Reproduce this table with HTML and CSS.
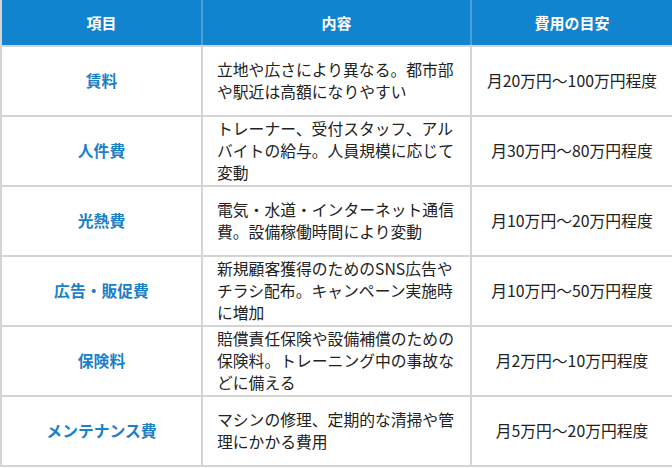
FILE: index.html
```html
<!DOCTYPE html>
<html lang="ja">
<head>
<meta charset="utf-8">
<link rel="stylesheet" href="styles.css">
</head>
<body>
<table class="cost-table">
  <colgroup>
    <col class="c1"><col class="c2"><col class="c3">
  </colgroup>
  <thead>
    <tr><th>項目</th><th>内容</th><th>費用の目安</th></tr>
  </thead>
  <tbody>
    <tr><td class="item">賃料</td><td class="desc">立地や広さにより異なる。都市部や駅近は高額になりやすい</td><td class="price">月20万円〜100万円程度</td></tr>
    <tr><td class="item">人件費</td><td class="desc">トレーナー、受付スタッフ、アルバイトの給与。人員規模に応じて変動</td><td class="price">月30万円〜80万円程度</td></tr>
    <tr><td class="item">光熱費</td><td class="desc">電気・水道・インターネット通信費。設備稼働時間により変動</td><td class="price">月10万円〜20万円程度</td></tr>
    <tr><td class="item">広告・販促費</td><td class="desc">新規顧客獲得のためのSNS広告やチラシ配布。キャンペーン実施時に増加</td><td class="price">月10万円〜50万円程度</td></tr>
    <tr><td class="item">保険料</td><td class="desc">賠償責任保険や設備補償のための保険料。トレーニング中の事故などに備える</td><td class="price">月2万円〜10万円程度</td></tr>
    <tr><td class="item">メンテナンス費</td><td class="desc">マシンの修理、定期的な清掃や管理にかかる費用</td><td class="price">月5万円〜20万円程度</td></tr>
  </tbody>
</table>
</body>
</html>
```
FILE: styles.css
```css
html, body {
  margin: 0;
  padding: 0;
  background: #ffffff;
}
body {
  font-family: "Noto Sans CJK JP", "Noto Sans", sans-serif;
  color: #222222;
}
.cost-table {
  width: 672px;
  border-collapse: collapse;
  table-layout: fixed;
}
.c1 { width: 201px; }
.c2 { width: 269px; }
.c3 { width: 202px; }
.cost-table th {
  background: #1184d0;
  color: #ffffff;
  font-weight: 700;
  font-size: 15px;
  height: 45px;
  padding: 0;
  text-align: center;
  border: 2px solid #4f9ed6;
  border-top: none;
  border-bottom-color: #d4d4d4;
}
.cost-table th:first-child { border-left-color: #d4d4d4; }
.cost-table th:last-child { border-right-color: #d4d4d4; }
.cost-table td {
  border: 2px solid #d4d4d4;
  height: 66px;
  padding: 1px 14px;
  font-size: 15.8px;
  line-height: 22px;
  vertical-align: middle;
}
.item {
  text-align: center;
  color: #1a80c8;
  font-weight: 700;
}
.desc {
  text-align: left;
}
.price {
  text-align: center;
  font-size: 16.1px;
}
```
